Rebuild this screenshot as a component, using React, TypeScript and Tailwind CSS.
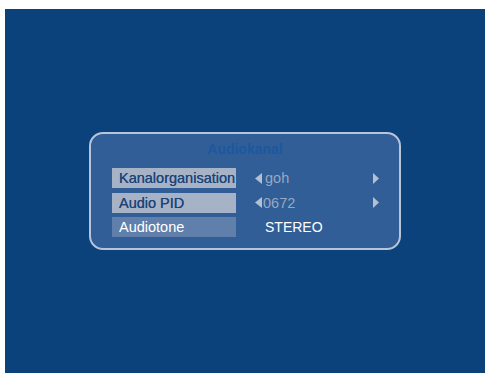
function ArrowLeft() {
  return (
    <svg width="7" height="11" viewBox="0 0 7 11" className="shrink-0">
      <path d="M7 0 L0 5.5 L7 11 Z" fill="#b3c0d3" />
    </svg>
  )
}

function ArrowRight() {
  return (
    <svg width="6" height="11" viewBox="0 0 6 11" className="shrink-0">
      <path d="M0 0 L6 5.5 L0 11 Z" fill="#b3c0d3" />
    </svg>
  )
}

const font = { fontFamily: '"Liberation Sans", Arial, sans-serif' }

export default function App() {
  return (
    <div className="w-[490px] h-[379px] bg-white pt-[9px] pl-[5px] pr-[5px] pb-[6px]" style={font}>
      <div className="w-full h-full bg-[#0c427b] flex items-center justify-center">
        <div className="w-[312px] h-[118px] rounded-[14px] border-2 border-[#b7c5d9] bg-[#315e96] pt-[7px]">
          <div className="text-center text-[14px] leading-[16px] font-bold text-[#1b58a0]">Audiokanal</div>

          <div className="mt-[11px] flex flex-col gap-[4.5px]">
            <div className="flex items-center h-[20px]">
              <div className="ml-[21px] w-[124px] h-[20px] bg-[#a6b2c5] pl-[7px] text-[14.5px] leading-[20px] text-[#1f4479] whitespace-nowrap [text-shadow:0_0_0.4px_#1f4479]">
                Kanalorganisation
              </div>
              <div className="ml-[19px] w-[124px] flex items-center justify-between">
                <div className="flex items-center gap-[3px]">
                  <ArrowLeft />
                  <span className="text-[14.5px] leading-[20px] text-[#95a8c3]">goh</span>
                </div>
                <ArrowRight />
              </div>
            </div>

            <div className="flex items-center h-[20px]">
              <div className="ml-[21px] w-[124px] h-[20px] bg-[#a6b2c5] pl-[7px] text-[14.5px] leading-[20px] text-[#1f4479] whitespace-nowrap [text-shadow:0_0_0.4px_#1f4479]">
                Audio PID
              </div>
              <div className="ml-[19px] w-[124px] flex items-center justify-between">
                <div className="flex items-center gap-[1px]">
                  <ArrowLeft />
                  <span className="text-[14.5px] leading-[20px] text-[#95a8c3]">0672</span>
                </div>
                <ArrowRight />
              </div>
            </div>

            <div className="flex items-center h-[20px]">
              <div className="ml-[21px] w-[124px] h-[20px] bg-[#6080ab] pl-[7px] text-[14.5px] leading-[20px] text-white whitespace-nowrap">
                Audiotone
              </div>
              <div className="ml-[29px] text-[14px] leading-[20px] text-white">STEREO</div>
            </div>
          </div>
        </div>
      </div>
    </div>
  )
}
